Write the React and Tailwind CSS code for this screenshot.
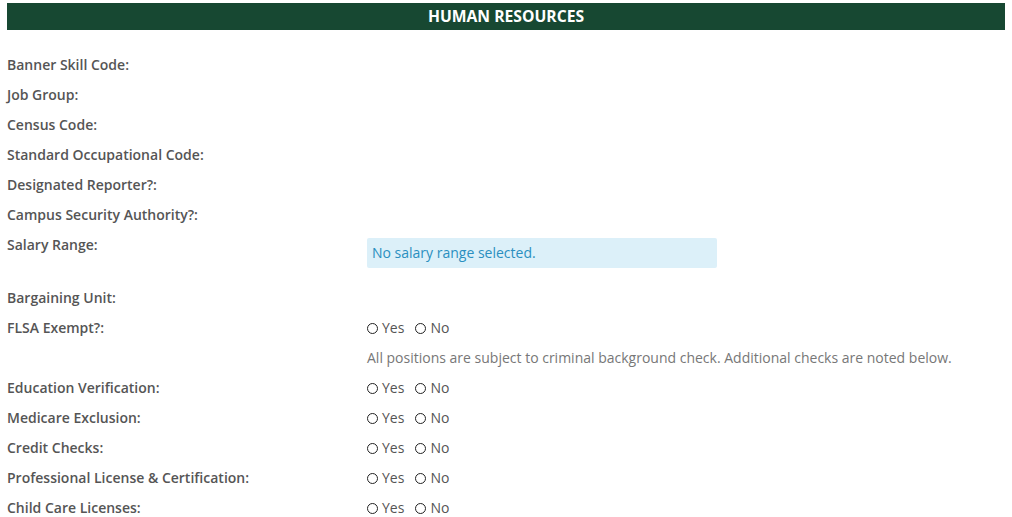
import React from 'react';

const Radio = ({ label }) => (
  <label className="flex items-center mr-[11px]">
    <span className="inline-block w-[11px] h-[11px] rounded-full border border-[#222] mr-[4px]" />
    <span>{label}</span>
  </label>
);

const YesNo = () => (
  <div className="flex items-center text-[#555]">
    <Radio label="Yes" />
    <Radio label="No" />
  </div>
);

const Row = ({ label, children }) => (
  <div className="flex pb-[10px]">
    <div className="w-[360px] shrink-0 font-semibold text-[#555] leading-[20px]">
      {label}
    </div>
    <div className="flex-1 leading-[20px]">{children}</div>
  </div>
);

const App = () => {
  return (
    <div
      className="bg-white w-[1012px] h-[517px] overflow-hidden px-[7px] pt-[3px] text-[14px]"
      style={{ fontFamily: '"Open Sans", "Liberation Sans", sans-serif' }}
    >
      <div className="w-[998px] h-[27px] bg-[#174832] text-white text-[15.7px] font-bold flex items-center justify-center">
        HUMAN RESOURCES
      </div>

      <div className="pt-[25px]">
        <Row label="Banner Skill Code:" />
        <Row label="Job Group:" />
        <Row label="Census Code:" />
        <Row label="Standard Occupational Code:" />
        <Row label="Designated Reporter?:" />
        <Row label="Campus Security Authority?:" />
        <div className="flex pb-[20px]">
          <div className="w-[360px] shrink-0 font-semibold text-[#555] leading-[20px]">
            Salary Range:
          </div>
          <div className="flex-1">
            <div className="mt-[3px] w-[350px] h-[30px] bg-[#dcf0f9] rounded-[2px] text-[#2a8fc0] flex items-center px-[5px] pb-[2px]">
              No salary range selected.
            </div>
          </div>
        </div>
        <Row label="Bargaining Unit:" />
        <Row label="FLSA Exempt?:">
          <YesNo />
        </Row>
        <Row label="">
          <span className="text-[#777]">
            All positions are subject to criminal background check. Additional checks are noted below.
          </span>
        </Row>
        <Row label="Education Verification:">
          <YesNo />
        </Row>
        <Row label="Medicare Exclusion:">
          <YesNo />
        </Row>
        <Row label="Credit Checks:">
          <YesNo />
        </Row>
        <Row label="Professional License & Certification:">
          <YesNo />
        </Row>
        <Row label="Child Care Licenses:">
          <YesNo />
        </Row>
      </div>
    </div>
  );
};

export default App;
